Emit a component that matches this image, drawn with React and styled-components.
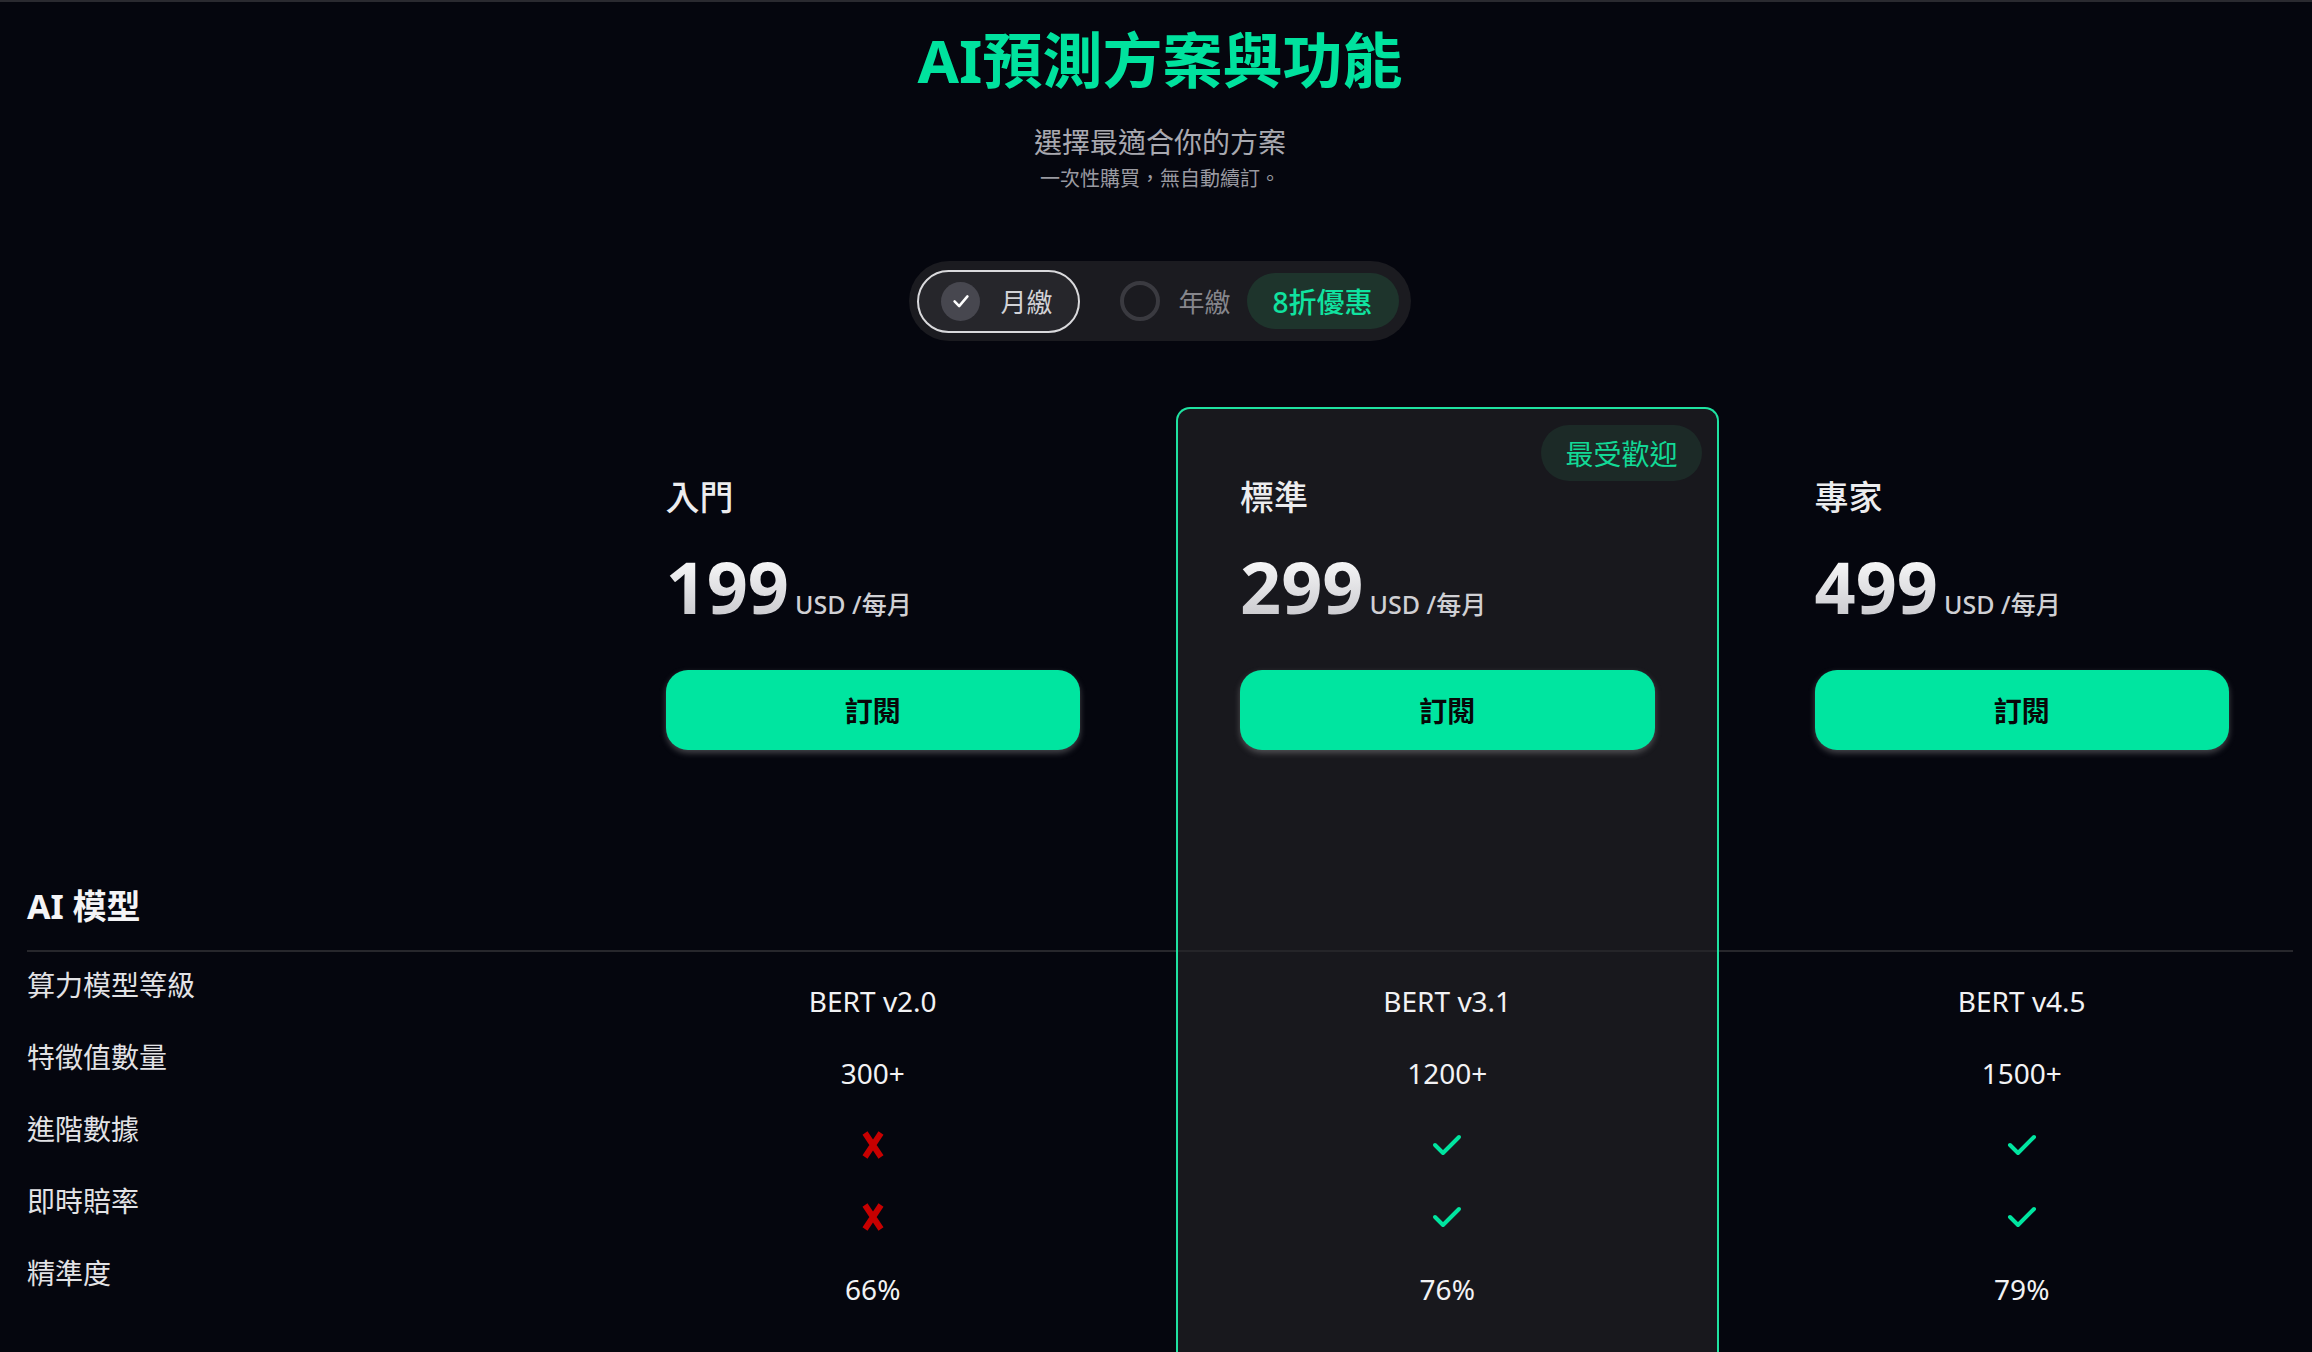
import styled, { createGlobalStyle } from "styled-components";

const GlobalStyle = createGlobalStyle`
  html, body {
    margin: 0;
    padding: 0;
    background: #05060e;
  }
  * {
    box-sizing: border-box;
  }
  body {
    font-family: "Noto Sans", "Noto Sans CJK TC", sans-serif;
    color: #eeeef0;
  }
`;

const plans = [
  { name: "入門", price: "199", values: ["BERT v2.0", "300+", false, false, "66%"] },
  { name: "標準", price: "299", featured: true, values: ["BERT v3.1", "1200+", true, true, "76%"] },
  { name: "專家", price: "499", values: ["BERT v4.5", "1500+", true, true, "79%"] },
];

const features = ["算力模型等級", "特徵值數量", "進階數據", "即時賠率", "精準度"];

const CheckIcon = () => (
  <svg width="32" height="24" viewBox="0 0 32 24" fill="none">
    <path d="M4 12 L12 20 L28 4" stroke="#00e5a0" strokeWidth="4" strokeLinecap="round" strokeLinejoin="round" />
  </svg>
);

const CrossIcon = () => (
  <svg width="28" height="28" viewBox="0 0 28 28" fill="none">
    <path d="M6 2 L22 26 M22 2 L6 26" stroke="#c80000" strokeWidth="6" strokeLinecap="butt" />
  </svg>
);

const SmallCheck = () => (
  <svg width="22" height="22" viewBox="0 0 24 24" fill="none">
    <path d="M5 12.5 L10 17.5 L19 7" stroke="#fff" strokeWidth="2.8" strokeLinecap="round" strokeLinejoin="round" />
  </svg>
);

const Pricing = () => {
  return (
    <Page>
      <GlobalStyle />
      <Hero>
        <Title>AI預測方案與功能</Title>
        <Subtitle>選擇最適合你的方案</Subtitle>
        <Note>一次性購買，無自動續訂。</Note>
        <Toggle>
          <ActiveOption>
            <CheckCircle><SmallCheck /></CheckCircle>
            <span>月繳</span>
          </ActiveOption>
          <Option>
            <Ring />
            <span>年繳</span>
          </Option>
          <Discount>8折優惠</Discount>
        </Toggle>
      </Hero>

      <Table>
        <Divider />
        <FeaturedPanel>
          <Popular>最受歡迎</Popular>
        </FeaturedPanel>

        {plans.map((plan, i) => (
          <PlanHead key={plan.name} $col={i + 2}>
            <PlanName>{plan.name}</PlanName>
            <PriceRow>
              <Price>{plan.price}</Price>
              <Unit>USD /每月</Unit>
            </PriceRow>
            <SubscribeButton>訂閱</SubscribeButton>
          </PlanHead>
        ))}

        <SectionTitle>AI 模型</SectionTitle>

        {features.map((label, r) => (
          <FeatureLabel key={label} $row={r + 4}>{label}</FeatureLabel>
        ))}

        {plans.map((plan, i) =>
          plan.values.map((v, r) => (
            <ValueCell key={plan.name + r} $col={i + 2} $row={r + 4}>
              {v === true ? <CheckIcon /> : v === false ? <CrossIcon /> : v}
            </ValueCell>
          ))
        )}
      </Table>
    </Page>
  );
};

const Page = styled.div`
  min-height: 100vh;
  border-top: 2px solid #2a2a30;
  padding: 22px 19px 0 27px;
  overflow: hidden;
`;

const Hero = styled.header`
  display: flex;
  flex-direction: column;
  align-items: center;
`;

const Title = styled.h1`
  margin: 0;
  font-size: 60px;
  line-height: 72px;
  font-weight: 700;
  color: #00e29e;
`;

const Subtitle = styled.p`
  margin: 27px 0 0;
  font-size: 28px;
  line-height: 39px;
  font-weight: 400;
  color: #a9a9b0;
`;

const Note = styled.p`
  margin: 3px 0 0;
  font-size: 20px;
  line-height: 28px;
  color: #9a9aa1;
`;

const Toggle = styled.div`
  margin-top: 68px;
  display: flex;
  align-items: center;
  height: 80px;
  padding: 0 12px 0 8px;
  border-radius: 40px;
  background: #1b1b20;
`;

const ActiveOption = styled.div`
  display: flex;
  align-items: center;
  gap: 20px;
  height: 63px;
  padding: 0 26px 0 22px;
  border: 2px solid #d9d9dc;
  border-radius: 32px;
  background: #26262b;
  font-size: 26px;
  color: #d2d2d6;
`;

const CheckCircle = styled.div`
  width: 39px;
  height: 39px;
  border-radius: 50%;
  background: #47474f;
  display: flex;
  align-items: center;
  justify-content: center;
`;

const Option = styled.div`
  display: flex;
  align-items: center;
  gap: 18px;
  margin-left: 40px;
  font-size: 26px;
  color: #86868c;
`;

const Ring = styled.div`
  width: 40px;
  height: 40px;
  border-radius: 50%;
  border: 4px solid #3a3a40;
`;

const Discount = styled.div`
  margin-left: 16px;
  height: 56px;
  padding: 0 26px;
  display: flex;
  align-items: center;
  border-radius: 28px;
  background: #1e342c;
  color: #10e3a0;
  font-size: 28px;
  font-weight: 500;
`;

const Table = styled.section`
  margin-top: 66px;
  display: grid;
  grid-template-columns: repeat(4, 1fr);
  grid-template-rows: auto auto auto repeat(5, 72px) 80px;
  column-gap: 32px;
`;

const FeaturedPanel = styled.div`
  grid-column: 3;
  grid-row: 1 / -1;
  position: relative;
  z-index: 0;
  border: 2px solid #1fe2a1;
  border-bottom: none;
  border-radius: 14px 14px 0 0;
  background: rgba(37, 36, 40, 0.6);
`;

const Popular = styled.span`
  position: absolute;
  top: 16px;
  right: 15px;
  height: 56px;
  padding: 0 24px;
  display: flex;
  align-items: center;
  border-radius: 28px;
  background: #1c2a27;
  color: #12d996;
  font-size: 28px;
`;

const PlanHead = styled.div`
  grid-column: ${(p) => p.$col};
  grid-row: 1;
  z-index: 1;
  padding: 66px 64px 0;
  display: flex;
  flex-direction: column;
`;

const PlanName = styled.h3`
  margin: 0;
  font-size: 34px;
  line-height: 48px;
  font-weight: 500;
  color: #ececee;
`;

const PriceRow = styled.div`
  margin-top: 29px;
  display: flex;
  align-items: baseline;
  gap: 6px;
`;

const Price = styled.span`
  font-size: 72px;
  line-height: 72px;
  font-weight: 700;
  background: linear-gradient(180deg, #ffffff 0%, #c6c6cb 100%);
  -webkit-background-clip: text;
  background-clip: text;
  color: transparent;
`;

const Unit = styled.span`
  font-size: 25px;
  font-weight: 500;
  color: #d0d0d4;
`;

const SubscribeButton = styled.button`
  margin-top: 48px;
  height: 80px;
  border: none;
  border-radius: 22px;
  background: #00e5a0;
  color: #080808;
  font-family: inherit;
  font-size: 28px;
  font-weight: 700;
  box-shadow: 0 3px 6px rgba(190, 190, 190, 0.35);
  cursor: pointer;
`;

const SectionTitle = styled.h2`
  grid-column: 1;
  grid-row: 2;
  z-index: 1;
  margin: 132px 0 0;
  font-size: 34px;
  line-height: 48px;
  font-weight: 700;
  color: #f4f4f6;
`;

const Divider = styled.hr`
  grid-column: 1 / -1;
  grid-row: 3;
  z-index: 0;
  margin: 20px 0 13px;
  border: none;
  height: 2px;
  background: #27272c;
`;

const FeatureLabel = styled.div`
  grid-column: 1;
  grid-row: ${(p) => p.$row};
  z-index: 1;
  align-self: center;
  margin-bottom: 32px;
  font-size: 28px;
  line-height: 39px;
  color: #e2e2e5;
`;

const ValueCell = styled.div`
  grid-column: ${(p) => p.$col};
  grid-row: ${(p) => p.$row};
  z-index: 1;
  display: flex;
  align-items: center;
  justify-content: center;
  font-size: 28px;
  line-height: 39px;
  color: #f2f2f4;
`;

export default Pricing;
